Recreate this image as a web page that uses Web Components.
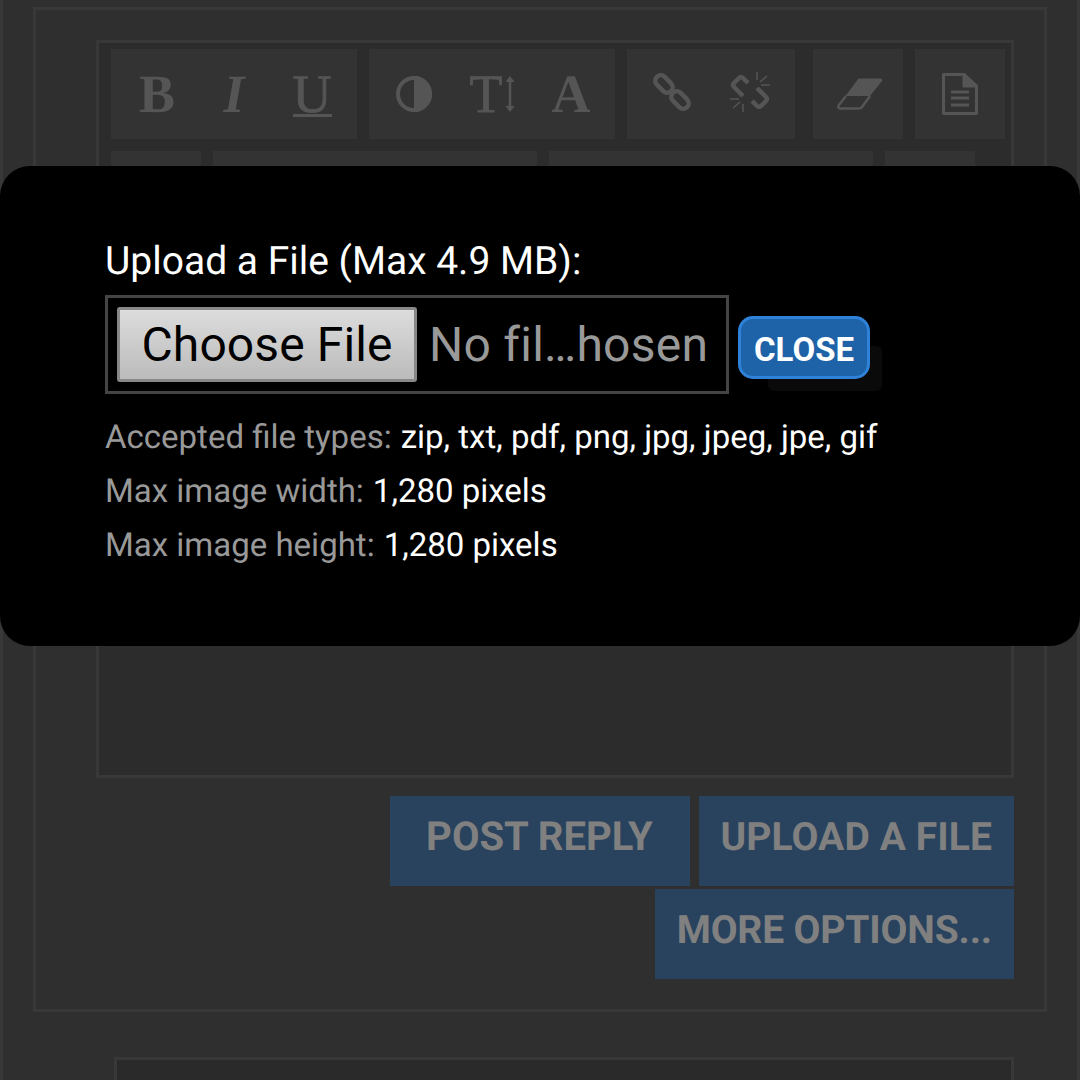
<!DOCTYPE html>
<html>
<head>
<meta charset="utf-8">
<title>Upload a File</title>
<style>
    html, body{ margin:0; height:1080px; overflow:hidden; background:#2f2f2f; }
    body{ font-family:'Roboto',sans-serif; position:relative; text-rendering:geometricPrecision; font-kerning:none; font-variant-ligatures:none; }
    .serif{ font:54px/1 'Liberation Serif',serif; -webkit-text-stroke:.8px #555; }
</style>
</head>
<body>

<forum-page>
    <reply-form>
        <reply-editor>
            <tool-group width="246">
                <tool-button><span style="font:bold 54px/1 'Liberation Serif',serif;margin-left:2px">B</span></tool-button>
                <tool-button><span style="font:italic bold 54px/1 'Liberation Serif',serif">I</span></tool-button>
                <tool-button><span class="serif" style="border-bottom:3px solid #555;line-height:39px;display:block;margin-top:3px">U</span></tool-button>
            </tool-group>
            <tool-group width="246">
                <tool-button>
                    <svg width="36" height="36" viewBox="0 0 36 36"><circle cx="18" cy="18" r="16" fill="none" stroke="#555" stroke-width="4"/><path d="M18 0a18 18 0 0 1 0 36z" fill="#555"/></svg>
                </tool-button>
                <tool-button>
                    <span class="serif" style="margin-right:2px">T</span>
                    <svg width="10" height="36" viewBox="0 0 10 36"><path d="M5 0l4.500 6H6.300v24h3.200L5 36 .5 30h3.200V6H.5z" fill="#555"/></svg>
                </tool-button>
                <tool-button><span style="font:bold 54px/1 'Liberation Serif',serif;margin-left:2px">A</span></tool-button>
            </tool-group>
            <tool-group width="168">
                <tool-button>
                    <svg width="40" height="40" viewBox="0 0 40 40" fill="none" stroke="#555" stroke-width="4.500" style="margin-bottom:4px">
                        <rect x="2" y="6.500" width="20" height="11" rx="5.500" transform="rotate(45 12 12)"/>
                        <rect x="18" y="22.500" width="20" height="11" rx="5.500" transform="rotate(45 28 28)"/>
                    </svg>
                </tool-button>
                <tool-button>
                    <svg width="40" height="40" viewBox="0 0 40 40" fill="none" stroke="#555" style="margin-bottom:4px">
                        <path d="M13 24 4 15Q2 13 4 11L9 6Q11 4 13 6L18 11" stroke-width="4.500"/>
                        <path d="M27 16 36 25Q38 27 36 29L31 34Q29 36 27 34L22 29" stroke-width="4.500"/>
                        <path d="M27 0V8M37 4 30 10M40 13H31M13 40V32M3 36 10 30M0 27H9" stroke-width="1.500"/>
                    </svg>
                </tool-button>
            </tool-group>
            <tool-group width="90" style="margin-left:6px">
                <tool-button>
                    <svg width="46" height="32" viewBox="0 0 46 32" style="margin-left:4px">
                        <path d="M21.500.5H43Q46 .5 45 3L33 18H8.500Z" fill="#555"/>
                        <path d="M9 18 2 27Q0 30 3 30.500H22Q24 30.500 25 29L33 18" fill="none" stroke="#555" stroke-width="2.500"/>
                    </svg>
                </tool-button>
            </tool-group>
            <tool-group width="90">
                <tool-button>
                    <svg width="36" height="42" viewBox="0 0 36 42" fill="none" stroke="#555" stroke-width="3"><path d="M1.500 1.500H22L34.500 13V40.500H1.500Z" stroke-linejoin="round"/><path d="M22 1.500V13H34.500Z" fill="#555"/><path d="M9 19H27M9 25H27M9 32H27"/></svg>
                </tool-button>
            </tool-group>

            <tool-group width="90"></tool-group>
            <tool-group width="324"></tool-group>
            <tool-group width="324"></tool-group>
            <tool-group width="90"></tool-group>
        </reply-editor>
        <form-actions>
            <action-button style="font-size:40px">POST REPLY</action-button>
            <action-button style="letter-spacing:.1px">UPLOAD A FILE</action-button>
            <action-button style="letter-spacing:-.15px">MORE OPTIONS...</action-button>
        </form-actions>
    </reply-form>
    <next-post></next-post>
</forum-page>

<upload-modal>
    <span slot="title">Upload a File (Max 4.9 MB):</span>
    <info-line label="Accepted file types:">zip, txt, pdf, png, jpg, jpeg, jpe, gif</info-line>
    <info-line label="Max image width:">1,280 pixels</info-line>
    <info-line label="Max image height:">1,280 pixels</info-line>
</upload-modal>

<script>
// tiny helper, every element below is just a template + open shadow root
function defineSimple(name, html, init){
    const template = document.createElement('template');
    template.innerHTML = html;
    customElements.define(name, class extends HTMLElement{
        constructor(){
            super();
            this.attachShadow({mode:'open'});
            this.shadowRoot.appendChild(template.content.cloneNode(true));
        }
        connectedCallback(){
            if(init) init(this);
        }
    });
}

defineSimple('forum-page', `
<style>
    :host{
        display:block;
        height:1080px;
        box-sizing:border-box;
        padding:7px 30px 0;
        border-left:3px solid #383838;
        border-right:3px solid #383838;
        overflow:hidden;
    }
</style>
<slot></slot>`);

defineSimple('reply-form', `
<style>
    :host{
        display:block;
        border:3px solid #383838;
        padding:30px 30px 30px 60px;
    }
</style>
<slot></slot>`);

defineSimple('reply-editor', `
<style>
    :host{
        display:flex;
        flex-wrap:wrap;
        align-content:flex-start;
        gap:12px;
        height:738px;
        box-sizing:border-box;
        border:3px solid #383838;
        background:#2c2c2c;
        padding:6px 6px 6px 12px;
    }
</style>
<slot></slot>`);

defineSimple('tool-group', `
<style>
    :host{
        display:flex;
        justify-content:center;
        height:90px;
        background:#333;
        flex:none;
    }
</style>
<slot></slot>`, el => { el.style.width = el.getAttribute('width') + 'px'; });

defineSimple('tool-button', `
<style>
    :host{
        display:flex;
        align-items:center;
        justify-content:center;
        width:78px;
        height:90px;
        color:#555;
    }
</style>
<slot></slot>`);

defineSimple('form-actions', `
<style>
    :host{
        display:flex;
        flex-wrap:wrap;
        justify-content:flex-end;
        gap:3px 9px;
        margin-top:18px;
    }
</style>
<slot></slot>`);

defineSimple('action-button', `
<style>
    :host{
        display:block;
        min-width:300px;
        box-sizing:border-box;
        height:90px;
        padding:0 22px;
        background:#29435e;
        color:#808080;
        font:700 39px/82px 'Roboto',sans-serif;
        text-align:center;
    }
</style>
<slot></slot>`);

defineSimple('next-post', `
<style>
    :host{
        display:block;
        height:80px;
        margin:45px 33px 0 81px;
        border:3px solid #383838;
        background:#2a2a2a;
    }
</style>`);

defineSimple('file-picker', `
<style>
    :host{
        display:flex;
        align-items:center;
        box-sizing:border-box;
        width:624px;
        height:99px;
        padding:0 9px;
        border:3px solid #444;
        font:48px 'Roboto',sans-serif;
        flex:none;
    }
    button{
        width:300px;
        height:75px;
        box-sizing:border-box;
        padding:0;
        margin-right:12px;
        border:3px solid #888;
        border-radius:3px;
        background:linear-gradient(#dcdcdc,#bbb);
        color:#000;
        font:inherit;
        letter-spacing:.1px;
    }
    span{ color:#999; white-space:nowrap; letter-spacing:.25px; }
</style>
<button type="button">Choose File</button><span>No fil…hosen</span>`);

defineSimple('close-button', `
<style>
    :host{
        display:block;
        position:relative;
        margin:6px 0 0 9px;
    }
    .shadow{
        position:absolute;
        left:30px;
        top:30px;
        width:114px;
        height:45px;
        border-radius:6px;
        background:#0a0a0a;
    }
    button{
        position:relative;
        display:block;
        box-sizing:border-box;
        width:132px;
        height:63px;
        padding:3px 0 0;
        border:3px solid #2f82d9;
        border-radius:15px;
        background:#1e62a8;
        color:#fff;
        font:700 33px 'Roboto',sans-serif;
    }
</style>
<div class="shadow"></div>
<button type="button">CLOSE</button>`);

defineSimple('info-line', `
<style>
    :host{
        display:block;
        font:33px/54px 'Roboto',sans-serif;
        color:#fff;
        white-space:nowrap;
    }
    b{ font-weight:400; color:#999; margin-right:9px; }
</style>
<b></b><slot></slot>`, el => {
    el.shadowRoot.querySelector('b').textContent = el.getAttribute('label');
});

defineSimple('upload-modal', `
<style>
    :host{
        position:absolute;
        left:0;
        top:166px;
        width:1080px;
        height:480px;
        box-sizing:border-box;
        padding:68px 105px 0;
        border-radius:30px;
        background:#000;
        color:#fff;
        font-family:'Roboto',sans-serif;
    }
    .title{
        display:block;
        font-size:39px;
        line-height:54px;
        margin:0 0 7px;
    }
    .row{
        display:flex;
        align-items:flex-start;
        margin-bottom:17px;
    }
    .row close-button{ margin-top:21px; }
</style>
<slot name="title" class="title"></slot>
<div class="row">
    <file-picker></file-picker>
    <close-button></close-button>
</div>
<div class="lines"><slot></slot></div>`);
</script>
</body>
</html>
